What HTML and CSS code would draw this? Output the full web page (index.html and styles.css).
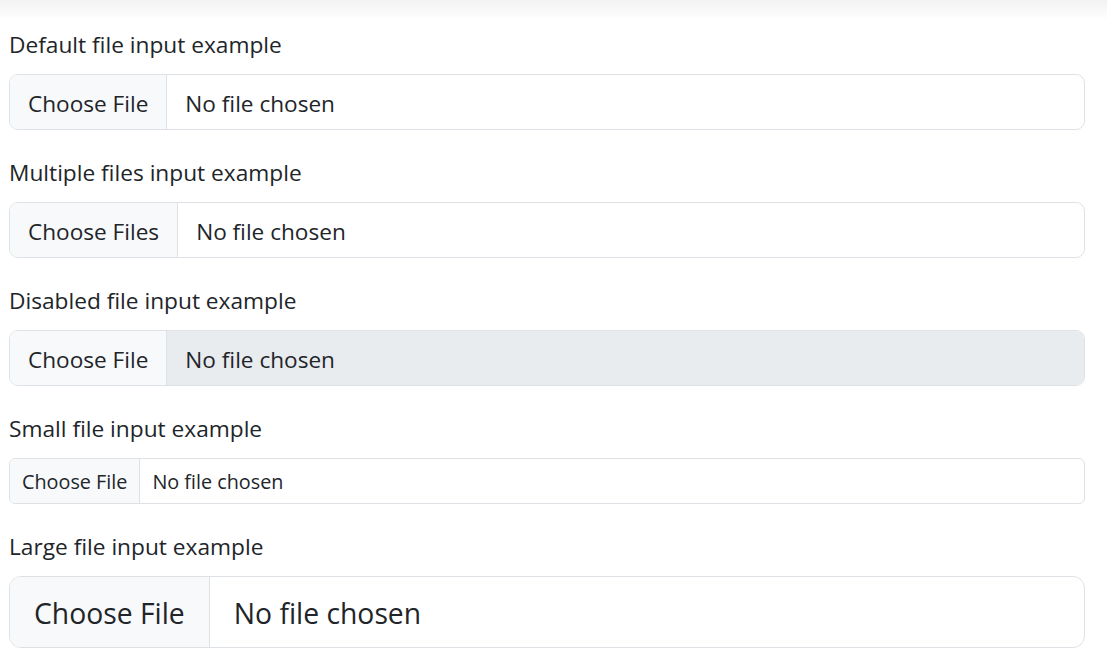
FILE: index.html
```html
<!DOCTYPE html>
<html lang="en">
<head>
<meta charset="utf-8">
<title>File inputs</title>
<link rel="stylesheet" href="styles.css">
</head>
<body>
<div class="topshade"></div>
<main class="page">
  <div class="field">
    <label class="form-label">Default file input example</label>
    <div class="file-input">
      <span class="file-btn">Choose File</span>
      <span class="file-name">No file chosen</span>
    </div>
  </div>
  <div class="field">
    <label class="form-label">Multiple files input example</label>
    <div class="file-input">
      <span class="file-btn">Choose Files</span>
      <span class="file-name">No file chosen</span>
    </div>
  </div>
  <div class="field">
    <label class="form-label">Disabled file input example</label>
    <div class="file-input disabled">
      <span class="file-btn">Choose File</span>
      <span class="file-name">No file chosen</span>
    </div>
  </div>
  <div class="field">
    <label class="form-label">Small file input example</label>
    <div class="file-input small">
      <span class="file-btn">Choose File</span>
      <span class="file-name">No file chosen</span>
    </div>
  </div>
  <div class="field">
    <label class="form-label">Large file input example</label>
    <div class="file-input large">
      <span class="file-btn">Choose File</span>
      <span class="file-name">No file chosen</span>
    </div>
  </div>
</main>
</body>
</html>
```
FILE: styles.css
```css
html, body {
  margin: 0;
  padding: 0;
  background: #fff;
}
body {
  font-family: "Open Sans", "Noto Sans", sans-serif;
  color: #212529;
}
.topshade {
  height: 20px;
  background: linear-gradient(#f2f2f2, #ffffff);
}
.page {
  padding: 6px 22px 0 9px;
}
.field {
  margin-bottom: 24px;
}
.form-label {
  display: block;
  font-size: 22.7px;
  line-height: 36px;
  padding-top: 1px;
  margin-bottom: 11px;
}
.file-input {
  display: flex;
  height: 56px;
  box-sizing: border-box;
  border: 1px solid #dee2e6;
  border-radius: 9px;
  overflow: hidden;
  font-size: 22.6px;
  background: #fff;
}
.file-btn {
  display: flex;
  align-items: center;
  padding: 2px 18px 0;
  background: #f8f9fa;
  border-right: 1px solid #dee2e6;
  white-space: nowrap;
}
.file-name {
  display: flex;
  align-items: center;
  padding: 2px 0 0 18px;
  flex: 1;
}
.file-input.disabled .file-name {
  background: #e9ecef;
}
.file-input.small {
  height: 46px;
  font-size: 19.8px;
  border-radius: 6px;
}
.file-input.small .file-btn {
  padding: 1px 12px 0;
}
.file-input.small .file-name {
  padding: 1px 0 0 12px;
}
.file-input.large {
  height: 72px;
  font-size: 28.3px;
  border-radius: 12px;
}
.file-input.large .file-btn {
  padding: 2px 24px 0;
}
.file-input.large .file-name {
  padding: 2px 0 0 24px;
}
```
